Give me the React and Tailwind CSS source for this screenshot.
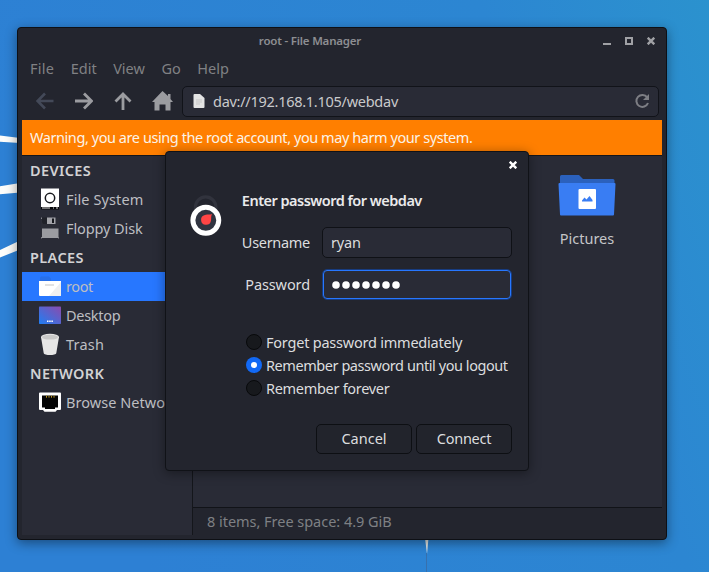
import React from "react";

function Wallpaper() {
  return (
    <svg className="absolute inset-0" width="709" height="572" viewBox="0 0 709 572">
      <defs>
        <linearGradient id="sky" x1="0" y1="0.3" x2="1" y2="0">
          <stop offset="0" stopColor="#2d80d4" />
          <stop offset="0.7" stopColor="#2c86d2" />
          <stop offset="1" stopColor="#2b92ce" />
        </linearGradient>
      </defs>
      <rect width="709" height="572" fill="url(#sky)" />
      <path d="M0 135.500 L20 138 V143 L0 141.700Z M0 186.300 L20 183 V192.500 L0 194.300Z M0 250 L20 240.500 V249.500 L0 257.500Z" fill="#fdfdfb" />
      <path d="M425 538 H428.500 L427 554Z" fill="#e5e8e6" />
      <path d="M426.500 553V572" stroke="#3770ad" />
    </svg>
  );
}

function CloseIcon({ className }) {
  return (
    <svg className={className} width="8" height="8" viewBox="0 0 8 8">
      <path d="M.7.7 7.300 7.300M7.300.7.7 7.300" stroke="currentColor" strokeWidth="2.400" />
    </svg>
  );
}

const icons = {
  disk: (
    <svg width="24" height="24" viewBox="0 0 24 24">
      <path d="M3 .5h18V20H3z" fill="#fff" />
      <circle cx="12" cy="10" r="4.700" fill="none" stroke="#16181c" strokeWidth="1.500" />
      <path d="M3 19h18v2.500H3z" fill="#08090b" />
      <path d="M4 20h8M15 20h1M18 20h2" stroke="#ddd" strokeWidth="1" />
    </svg>
  ),
  floppy: (
    <svg width="24" height="24" viewBox="0 0 24 24">
      <path d="M3 .5h18V21.500H3z" fill="#2b2d36" />
      <path d="M4 .5h5V7H5L4 5z" fill="#202229" />
      <path d="M9 .5h8.500V7H9z" fill="#a2a3a8" />
      <path d="M14 1.500h2V6h-2z" fill="#15171c" />
      <path d="M4 11.500h16.500v9.500H4z" fill="#9b9ca1" />
      <path d="M3 .5h1V2H3zM3 20h1v1.500H3zM20 20h1v1.500h-1z" fill="#85868c" />
    </svg>
  ),
  home: (
    <svg width="24" height="24" viewBox="0 0 24 24">
      <path d="M3 1.500h8l2 2v4H2v-5z" fill="#286fe9" />
      <path d="M1 6h22v14a1 1 0 0 1-1 1H2a1 1 0 0 1-1-1z" fill="#fff" />
      <path d="M23 7v13a1 1 0 0 1-1 1H11z" fill="#f0f0f0" />
      <path d="M7 10h9" stroke="#c5c5c5" strokeWidth="1" />
    </svg>
  ),
  desktop: (
    <svg width="24" height="24" viewBox="0 0 24 24">
      <defs>
        <linearGradient id="desk" x1="0" y1="1" x2="1" y2="0">
          <stop stopColor="#207ef3" />
          <stop offset="1" stopColor="#8b4bad" />
        </linearGradient>
      </defs>
      <rect x="1" y="2.500" width="22" height="17.500" rx=".7" fill="url(#desk)" />
      <path d="M9 17.200h6" stroke="#fff" strokeWidth="1.500" strokeDasharray="1.500 .7" />
    </svg>
  ),
  trash: (
    <svg width="24" height="24" viewBox="0 0 24 24">
      <path d="M3 4l2.700 16C6 22.700 18 22.700 18.300 20L21 4z" fill="#e6e6e6" />
      <ellipse cx="12" cy="4" rx="9" ry="3.200" fill="#e6e6e6" />
      <ellipse cx="12" cy="4.200" rx="8" ry="2.400" fill="#c9c9c9" />
    </svg>
  ),
  network: (
    <svg width="24" height="24" viewBox="0 0 24 24">
      <path d="M2 1.500h20a1 1 0 0 1 1 1V18a1 1 0 0 1-1 1h-3l-1.500 1.800h-11L5 19H2a1 1 0 0 1-1-1V2.500a1 1 0 0 1 1-1z" fill="#fff" />
      <path d="M4 4.500h16v12h-3V18H7v-1.500H4z" fill="#050505" />
      <path d="M8.500 4.700v2M11 4.700v2M13.500 4.700v2M16 4.700v2" stroke="#b89420" strokeWidth="1" />
    </svg>
  ),
};

function Heading({ children }) {
  return <div className="flex h-[29px] items-center pb-0.5 pl-2 font-semibold tracking-[0.38px] text-[#d2d2d4]">{children}</div>;
}

function Item({ icon, children, active, tracking }) {
  return (
    <div className={"flex h-[29px] items-center gap-1 pl-4 " + (active ? "bg-[#2777ff]" : "")}>
      <span className="shrink-0">{icon}</span>
      <span className={"pb-0.5 " + tracking}>{children}</span>
    </div>
  );
}

function Radio({ checked, children, tracking }) {
  return (
    <div className="flex h-[23px] items-center gap-1">
      <span
        className={
          "flex size-4 shrink-0 items-center justify-center rounded-full " +
          (checked ? "bg-[#1269f5]" : "border border-[#08090b] bg-[#17191d]")
        }
      >
        {checked && <span className="size-[6px] rounded-full bg-white" />}
      </span>
      <span className={tracking}>{children}</span>
    </div>
  );
}

function FileManager() {
  return (
    <div className="absolute left-[17px] top-[27px] flex h-[513px] w-[650px] flex-col rounded-[4px] border border-[#0e1015] bg-[#23252e] px-1 pb-1 shadow-[0_3px_12px_rgba(0,0,0,0.42)]">
      <div className="relative flex h-[26px] items-center justify-center text-[11.5px] font-semibold text-[#8d8e92]">
        <span className="mr-[64px] tracking-[-0.2px]">root - File Manager</span>
        <div className="absolute right-[7px] flex items-center gap-[14px] text-[#a0a1a5]">
          <svg width="8" height="8" viewBox="0 0 8 8"><path d="M0 7h8" stroke="currentColor" strokeWidth="2" /></svg>
          <svg width="8" height="8" viewBox="0 0 8 8"><path d="M1 1h6v6H1z" fill="none" stroke="currentColor" strokeWidth="2" /></svg>
          <CloseIcon />
        </div>
      </div>
      <div className="flex h-[29px] items-center gap-[16.5px] pb-0.5 pl-2 text-[#808184]">
        <span className="tracking-[0.25px]">File</span><span>Edit</span><span>View</span><span>Go</span><span>Help</span>
      </div>
      <div className="flex h-[37px] items-center pl-[14px] pr-[3px] text-[#9b9ca0]">
        <div className="flex items-center pb-0.5">
          <svg width="18" height="18" viewBox="0 0 18 18" className="text-[#434958]"><path d="M17.500 9H2M9 1.500 1.500 9 9 16.500" fill="none" stroke="currentColor" strokeWidth="2.600" /></svg>
          <svg width="18" height="18" viewBox="0 0 18 18" className="ml-[21px]"><path d="M0 9h16M9 1.500 16.500 9 9 16.500" fill="none" stroke="currentColor" strokeWidth="2.800" /></svg>
          <svg width="18" height="18" viewBox="0 0 18 18" className="ml-[21px]"><path d="M9 18V2M1.500 9.500 9 2l7.500 7.500" fill="none" stroke="currentColor" strokeWidth="2.800" /></svg>
          <svg width="21" height="20" viewBox="0 0 21 20" className="ml-[20px]"><path d="M10.500 0 16 5V3h2.500v5L21 11h-2.500v8.500h-5v-6h-6v6h-5V11H0z" fill="currentColor" /></svg>
        </div>
        <div className="ml-[9px] flex h-[31px] flex-1 items-center rounded-[5px] border border-[#111319] bg-[#292b36] pb-px pl-[10px] pr-2 text-[#c9cacc]">
          <svg width="12" height="14" viewBox="0 0 12 14"><path d="M1.500 0H7l4.500 4v9a1 1 0 0 1-1 1h-9a1 1 0 0 1-1-1V1a1 1 0 0 1 1-1z" fill="#e4e4e4" /><path d="M3 6h6M3 8h6M3 10h4" stroke="#c7c7c7" /></svg>
          <span className="ml-2 flex-1 pb-px tracking-[-0.27px]">dav://192.168.1.105/webdav</span>
          <svg width="16" height="16" viewBox="0 0 16 16" className="text-[#7d7e84]"><path d="M13.200 4.300A6 6 0 1 0 14 10" fill="none" stroke="currentColor" strokeWidth="2" /><path d="M15 1v6H9z" fill="currentColor" /></svg>
        </div>
      </div>
      <div className="flex h-[36px] shrink-0 items-center border-b border-[#14161b] bg-[#ff7f00] pb-0.5 pl-2 text-[#fbf3e8]">
        <span className="tracking-[-0.43px]">Warning, you are using the root account, you may harm your system.</span>
      </div>
      <div className="flex min-h-0 flex-1">
        <div className="w-[171px] overflow-hidden whitespace-nowrap border-r border-[#14161b] bg-[#292b36] text-[#bdbec2]">
          <Heading>DEVICES</Heading>
          <Item icon={icons.disk} tracking="tracking-[0.1px]">File System</Item>
          <Item icon={icons.floppy} tracking="tracking-[-0.1px]">Floppy Disk</Item>
          <Heading>PLACES</Heading>
          <Item icon={icons.home} active tracking="tracking-[-0.4px]">root</Item>
          <Item icon={icons.desktop} tracking="tracking-[-0.3px]">Desktop</Item>
          <Item icon={icons.trash} tracking="tracking-[0.2px]">Trash</Item>
          <Heading>NETWORK</Heading>
          <Item icon={icons.network} tracking="tracking-[0.05px]">Browse Network</Item>
        </div>
        <div className="flex flex-1 flex-col">
          <div className="flex flex-1 justify-end bg-[#292b36] pr-[46px] pt-[18px]">
            <div className="flex w-[58px] flex-col items-center text-[#c4c5c8]">
              <svg width="58" height="42" viewBox="0 0 58 42">
                <path d="M2 10V2.500A1.500 1.500 0 0 1 3.500 1H21l4 4h30a1.500 1.500 0 0 1 1.500 1.500V12z" fill="#2b61bd" />
                <path d="M1.500 9h55a1 1 0 0 1 1 1l-1.500 30.500a1 1 0 0 1-1 1H3a1 1 0 0 1-1-1L.5 10a1 1 0 0 1 1-1z" fill="#397df3" />
                <rect x="20.500" y="15" width="17.500" height="20" rx="1" fill="#fff" />
                <path d="M24 27.500v-1l2.500-3 2 2 3-3.500 3 4v1.500z" fill="#397df3" />
              </svg>
              <span className="mt-3">Pictures</span>
            </div>
          </div>
          <div className="flex h-[28px] items-center border-t border-[#111318] pb-0.5 pl-[14px] text-[#7e8084]">
            <span className="tracking-[-0.03px]">8 items, Free space: 4.9 GiB</span>
          </div>
        </div>
      </div>
    </div>
  );
}

function PasswordDots() {
  return (
    <svg width="70" height="10" viewBox="0 0 70 10">
      {[0, 1, 2, 3, 4, 5, 6].map((i) => <circle key={i} cx={5 + i * 10} cy="5" r="3.800" fill="#fff" />)}
    </svg>
  );
}

function PasswordDialog() {
  return (
    <div className="absolute left-[165px] top-[151px] h-[320px] w-[364px] rounded-[4px] border border-[#101217] bg-[#23252e] px-4 pt-[9px] text-[#dcdddf] shadow-[0_2px_12px_rgba(0,0,0,0.4)]">
      <div className="flex justify-end text-white"><CloseIcon className="mr-[-5px]" /></div>
      <div className="mt-[21px] flex">
        <svg width="32" height="44" viewBox="0 0 32 44" className="ml-2 mt-[3px]">
          <path d="M5.500 20v-6a10.200 10.200 0 0 1 20.500 0v6" fill="none" stroke="#31333d" strokeWidth="3.200" />
          <circle cx="15.900" cy="27.300" r="13" fill="#303440" stroke="#fff" strokeWidth="5" />
          <path d="M22 21c-2 1-4 0-7 1a5 5 0 1 0 6 6c.6-2-.2-4 1-7z" fill="#ff4545" />
        </svg>
        <div className="ml-5 flex-1">
          <div className="flex h-[22px] items-center pb-0.5 font-semibold tracking-[-0.52px] text-[#eaeaeb]">Enter password for webdav</div>
          <div className="mt-[15px] flex items-center justify-end gap-3">
            <span className="pb-0.5 tracking-[-0.3px]">Username</span>
            <div className="flex h-[31px] w-[190px] items-center rounded-[5px] border border-[#0f1116] bg-[#292b36] pb-0.5 pl-2 tracking-[-0.2px]">ryan</div>
          </div>
          <div className="mt-[11px] flex items-center justify-end gap-3">
            <span className="pb-0.5 tracking-[-0.1px]">Password</span>
            <div className="flex h-[31px] w-[190px] items-center rounded-[5px] border border-[#173c80] bg-[#292b36]">
              <div className="flex h-[29px] flex-1 items-center rounded-[4px] border border-[#2777ff] pl-[7px]">
                <PasswordDots />
              </div>
            </div>
          </div>
        </div>
      </div>
      <div className="ml-16 mt-[30px]">
        <Radio tracking="tracking-[-0.22px]">Forget password immediately</Radio>
        <Radio checked tracking="tracking-[-0.44px]">Remember password until you logout</Radio>
        <Radio tracking="tracking-[-0.3px]">Remember forever</Radio>
      </div>
      <div className="mt-[25px] flex justify-end gap-1">
        <div className="flex h-[30px] w-24 items-center justify-center rounded-[5px] border border-[#0d0f13] bg-[#22242c] pb-0.5">Cancel</div>
        <div className="flex h-[30px] w-24 items-center justify-center rounded-[5px] border border-[#0d0f13] bg-[#22242c] pb-0.5 tracking-[-0.28px]">Connect</div>
      </div>
    </div>
  );
}

export default function App() {
  return (
    <div className="relative h-[572px] w-[709px] overflow-hidden whitespace-nowrap font-['Noto_Sans',sans-serif] text-[14.5px] leading-5">
      <Wallpaper />
      <FileManager />
      <PasswordDialog />
    </div>
  );
}
